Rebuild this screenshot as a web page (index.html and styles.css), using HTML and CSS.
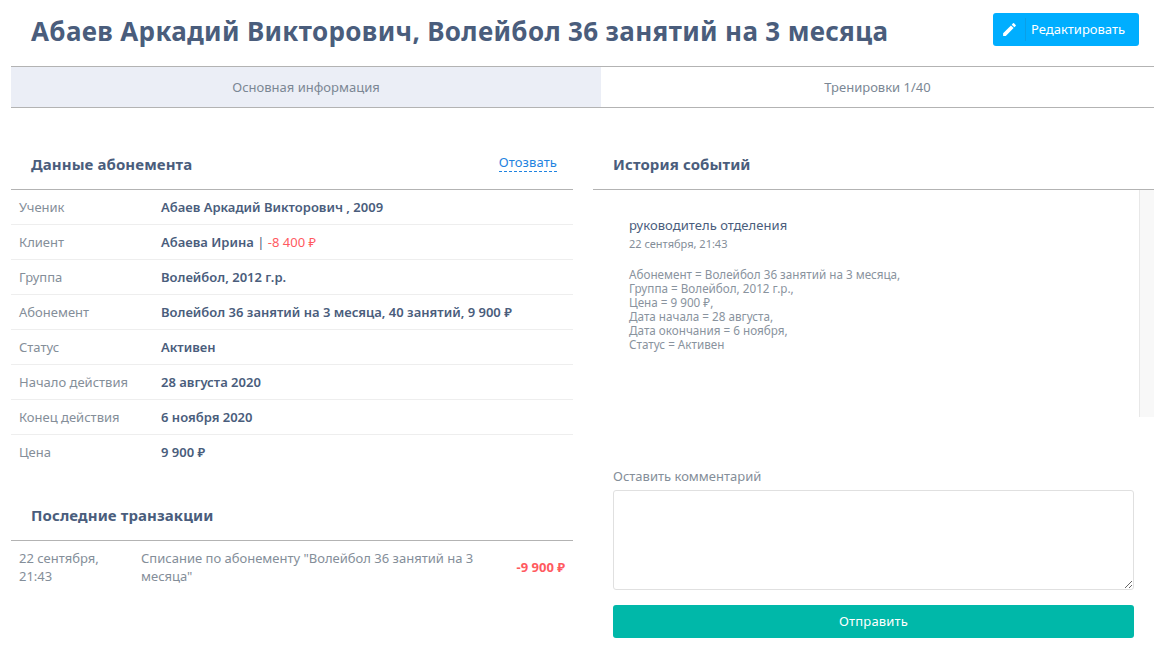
FILE: index.html
```html
<!DOCTYPE html>
<html lang="ru">
<head>
<meta charset="UTF-8">
<title>Абонемент</title>
<link rel="stylesheet" href="styles.css">
</head>
<body>
<div class="top-bar">
  <h1>Абаев Аркадий Викторович, Волейбол 36 занятий на 3 месяца</h1>
  <button class="edit-btn">
    <span class="edit-icon">
      <svg width="17" height="17" viewBox="0 0 24 24"><path fill="#fff" d="M3 17.25V21h3.75L17.81 9.94l-3.75-3.75L3 17.25zM20.71 7.04a1 1 0 0 0 0-1.41l-2.34-2.34a1 1 0 0 0-1.41 0l-1.83 1.83 3.75 3.75 1.83-1.83z"/></svg>
    </span>
    <span class="edit-text">Редактировать</span>
  </button>
</div>

<div class="tabs">
  <div class="tab active">Основная информация</div>
  <div class="tab">Тренировки 1/40</div>
</div>

<div class="columns">
  <div class="col-left">
    <div class="section-head">
      <h2>Данные абонемента</h2>
      <a class="revoke">Отозвать</a>
    </div>
    <div class="row"><div class="row-label">Ученик</div><div class="row-value">Абаев Аркадий Викторович , 2009</div></div>
    <div class="row"><div class="row-label">Клиент</div><div class="row-value">Абаева Ирина <span class="sep">|</span> <span class="debt">-8 400 ₽</span></div></div>
    <div class="row"><div class="row-label">Группа</div><div class="row-value">Волейбол, 2012 г.р.</div></div>
    <div class="row"><div class="row-label">Абонемент</div><div class="row-value">Волейбол 36 занятий на 3 месяца, 40 занятий, 9 900 ₽</div></div>
    <div class="row"><div class="row-label">Статус</div><div class="row-value">Активен</div></div>
    <div class="row"><div class="row-label">Начало действия</div><div class="row-value">28 августа 2020</div></div>
    <div class="row"><div class="row-label">Конец действия</div><div class="row-value">6 ноября 2020</div></div>
    <div class="row last"><div class="row-label">Цена</div><div class="row-value">9 900 ₽</div></div>

    <div class="section-head second">
      <h2>Последние транзакции</h2>
    </div>
    <div class="transaction">
      <div class="tr-date">22 сентября, 21:43</div>
      <div class="tr-text">Списание по абонементу "Волейбол 36 занятий на 3 месяца"</div>
      <div class="tr-sum">-9 900 ₽</div>
    </div>
  </div>

  <div class="col-right">
    <div class="section-head">
      <h2>История событий</h2>
    </div>
    <div class="history">
      <div class="history-body">
        <div class="history-author">руководитель отделения</div>
        <div class="history-date">22 сентября, 21:43</div>
        <div class="history-text">Абонемент = Волейбол 36 занятий на 3 месяца,<br>Группа = Волейбол, 2012 г.р.,<br>Цена = 9 900 ₽,<br>Дата начала = 28 августа,<br>Дата окончания = 6 ноября,<br>Статус = Активен</div>
      </div>
      <div class="history-scroll"></div>
    </div>
    <div class="comment">
      <label class="comment-label">Оставить комментарий</label>
      <textarea class="comment-input"></textarea>
      <button class="send-btn">Отправить</button>
    </div>
  </div>
</div>
</body>
</html>
```

FILE: styles.css
```css
body {
  font-family: "Noto Sans", "Open Sans", sans-serif;
  font-size: 13px;
  margin: 0;
  padding: 0;
  background-color: #fff;
  color: #848e99;
}
.top-bar {
  display: flex;
  justify-content: space-between;
  align-items: flex-start;
  height: 66px;
  box-sizing: border-box;
  padding: 13px 26px 0 31px;
}
h1 {
  margin: 0;
  font-size: 26px;
  line-height: 36px;
  font-weight: 700;
  letter-spacing: 0.35px;
  color: #4a5d7c;
}
.edit-btn {
  display: flex;
  align-items: center;
  width: 146px;
  height: 33px;
  padding: 0;
  border: none;
  border-radius: 3px;
  background-color: #00aeff;
  color: #fff;
  font-family: inherit;
  font-size: 13px;
  cursor: pointer;
}
.edit-icon {
  display: flex;
  align-items: center;
  justify-content: center;
  width: 32px;
  height: 23px;
  border-right: 1px solid #0a9fe6;
}
.edit-text {
  margin-left: 5px;
  line-height: 18px;
  padding-bottom: 2px;
}
.tabs {
  display: flex;
  margin: 0 11px;
  height: 42px;
  box-sizing: border-box;
  border-top: 1px solid #b3b3b3;
  border-bottom: 1px solid #b3b3b3;
}
.tab {
  flex: 1;
  display: flex;
  align-items: center;
  justify-content: center;
  color: #7b8794;
}
.tab.active {
  flex: none;
  width: 590px;
  background-color: #ebeef6;
}
.columns {
  display: flex;
  gap: 20px;
  margin: 0 11px;
}
.col-left {
  width: 562px;
}
.col-right {
  flex: 1;
}
.section-head {
  display: flex;
  justify-content: space-between;
  align-items: center;
  height: 82px;
  box-sizing: border-box;
  padding: 30px 16px 0 20px;
  border-bottom: 1px solid #b3b3b3;
}
.section-head.second {
  height: 71px;
  padding-top: 19px;
}
h2 {
  margin: 0;
  font-size: 15px;
  font-weight: 700;
  letter-spacing: 0.1px;
  color: #4a5d7c;
}
.revoke {
  color: #1f83e0;
  border-bottom: 1px dashed #1f83e0;
  margin-bottom: 3px;
  letter-spacing: 0.1px;
}
.row {
  display: flex;
  align-items: center;
  height: 35px;
  box-sizing: border-box;
  padding-left: 8px;
  border-bottom: 1px solid #eeeeee;
}
.row.last {
  border-bottom-color: transparent;
}
.row-label {
  width: 142px;
}
.row-value {
  font-weight: 600;
  color: #4a5d7c;
}
.sep {
  font-weight: 400;
}
.debt {
  font-weight: 400;
  color: #ff5a5f;
}
.transaction {
  display: flex;
  align-items: center;
  padding: 8px 8px 0;
  line-height: 18px;
}
.tr-date {
  width: 122px;
  flex: none;
  box-sizing: border-box;
  padding-right: 20px;
}
.tr-text {
  flex: 1;
  padding-right: 30px;
}
.tr-sum {
  flex: none;
  font-weight: 700;
  color: #ff5a5f;
}
.history {
  display: flex;
  height: 227px;
}
.history-body {
  flex: 1;
  padding: 26px 36px;
}
.history-scroll {
  width: 14px;
  background-color: #f8f8f8;
  border-left: 1px solid #e8e8e8;
}
.history-author {
  color: #4a5d7c;
  line-height: 18px;
  letter-spacing: 0.05px;
}
.history-date {
  margin-top: 1px;
  font-size: 11px;
  line-height: 18px;
}
.history-text {
  margin-top: 14px;
  font-size: 11.7px;
  line-height: 14px;
  color: #89939e;
}
.comment {
  padding: 50px 20px 0;
}
.comment-label {
  display: block;
  line-height: 18px;
  margin-bottom: 5px;
}
.comment-input {
  display: block;
  width: 100%;
  height: 100px;
  box-sizing: border-box;
  border: 1px solid #e0e0e0;
  border-radius: 3px;
  padding: 0;
}
.send-btn {
  display: block;
  width: 100%;
  height: 33px;
  margin-top: 15px;
  padding: 0 0 2px;
  border: none;
  border-radius: 3px;
  background-color: #00b8a9;
  color: #fff;
  font-family: inherit;
  font-size: 13px;
  letter-spacing: 0.15px;
}
```
